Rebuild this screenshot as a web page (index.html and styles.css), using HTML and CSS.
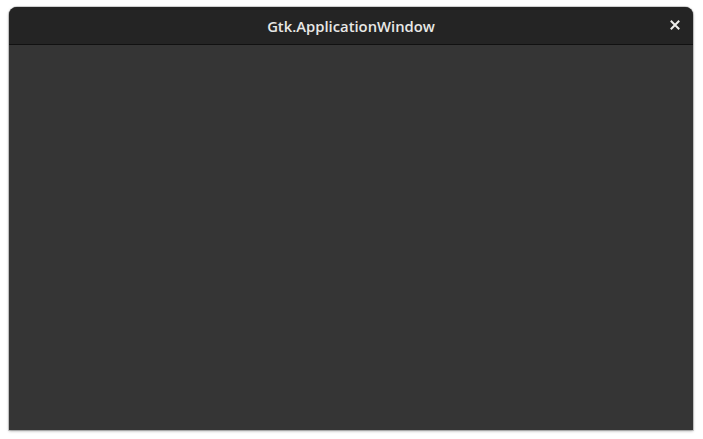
FILE: index.html
```html
<!DOCTYPE html>
<html>
<head>
<meta charset="utf-8">
<link rel="stylesheet" href="styles.css">
</head>
<body>
<div class="window">
  <header class="titlebar">
    <span class="title">Gtk.ApplicationWindow</span>
    <button class="close" aria-label="Close">
      <svg width="10" height="10" viewBox="0 0 10 10"><path d="M1.5 1.5 L8.5 8.5 M8.5 1.5 L1.5 8.5" stroke="#eeeeec" stroke-width="2" stroke-linecap="square"/></svg>
    </button>
  </header>
  <main class="content"></main>
</div>
</body>
</html>
```
FILE: styles.css
```css
html, body { margin: 0; padding: 0; background: #ffffff; }
body { padding: 7px 10px 9px 9px; height: 439px; box-sizing: border-box; display: flex; }
.window {
  flex: 1;
  display: flex;
  flex-direction: column;
  border-radius: 8px 8px 0 0;
  overflow: hidden;
  background: #353535;
  box-shadow: 0 1px 3px rgba(0,0,0,0.35), 0 0 0 1px rgba(0,0,0,0.15);
}
.titlebar {
  height: 37px;
  flex: none;
  background: #242424;
  border-bottom: 1px solid #111111;
  display: flex;
  align-items: center;
  justify-content: center;
  position: relative;
}
.title {
  font-family: "Open Sans", "Noto Sans", sans-serif;
  font-weight: 600;
  font-size: 14.8px;
  color: #e8e8e6;
  letter-spacing: 0;
  margin-top: 1px;
}
.close {
  position: absolute;
  right: 13px;
  top: 13px;
  width: 10px;
  height: 10px;
  padding: 0;
  border: 0;
  background: none;
  display: flex;
}
.content { flex: 1; background: #353535; }
```
